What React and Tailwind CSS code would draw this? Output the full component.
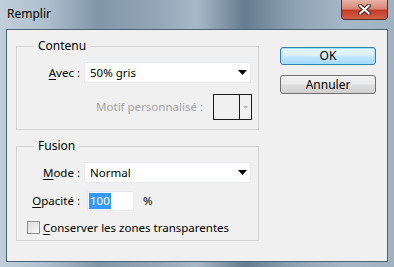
import React from "react";

const font = { fontFamily: '"Noto Sans", "Liberation Sans", sans-serif' };

const Key = ({ children }) => <span className="underline underline-offset-2">{children}</span>;

const Arrow = () => (
  <svg width="9" height="5" viewBox="0 0 9 5" className="shrink-0">
    <path d="M0 0 L9 0 L4.5 5 Z" fill="#000" />
  </svg>
);

const Select = ({ value }) => (
  <div className="flex h-[21px] w-[167px] items-center justify-between border border-[#e6e9ed] bg-white pl-[5px] pr-[3px]">
    <span>{value}</span>
    <Arrow />
  </div>
);

const Group = ({ title, children, className = "" }) => (
  <fieldset className={`w-[243px] border border-[#d5d5d5] ${className}`}>
    <legend className="ml-[17px] px-[4px] text-[12px] leading-[16px]">{title}</legend>
    {children}
  </fieldset>
);

export default function App() {
  return (
    <div
      className="flex h-[267px] w-[394px] flex-col text-[11.5px] text-black"
      style={font}
    >
      <div className="flex h-[267px] flex-col bg-[linear-gradient(90deg,#c2cfda_0%,#adbecd_12%,#8196a9_25%,#93a7b8_40%,#a7b9c8_50%,#657c90_62%,#8ea3b5_75%,#a6b8c7_88%,#9fb2c2_100%)]">
        <div className="flex h-[29px] items-start justify-between pl-[7px] pr-[6px]">
          <span className="mt-[6px] text-[12px] leading-[16px]">Remplir</span>
          <div className="flex h-[20px] w-[47px] items-center justify-center rounded-b-[4px] border border-t-0 border-[#5b2e28] bg-[linear-gradient(180deg,#e7b3a7_0%,#d98776_45%,#c43c28_55%,#d0604a_100%)]">
            <svg width="13" height="11" viewBox="0 0 13 11">
              <path d="M2 1.5 L11 9.5 M11 1.5 L2 9.5" stroke="#3a1a16" strokeWidth="4" strokeLinecap="round" />
              <path d="M2 1.5 L11 9.5 M11 1.5 L2 9.5" stroke="#fff" strokeWidth="2.2" strokeLinecap="round" />
            </svg>
          </div>
        </div>
        <div className="mx-[6px] mb-[5px] flex flex-1 border border-[#4e6274] bg-[#f0f0f0]">
          <div className="ml-[9px] mt-[8px] flex flex-col gap-[8px]">
            <Group title="Contenu" className="h-[92px]">
              <div className="mt-[8px] flex items-center">
                <span className="w-[63px] text-right">
                  <Key>A</Key>vec :
                </span>
                <div className="ml-[4px]">
                  <Select value="50% gris" />
                </div>
              </div>
              <div className="mt-[11px] flex items-center justify-end pr-[6px]">
                <span className="text-[#a3a3a3]">Motif personnalisé :</span>
                <div className="ml-[10px] flex h-[26px] w-[39px] border border-[#1a1a1a] bg-[#f0f0f0]">
                  <div className="w-[26px] border-r border-[#1a1a1a]" />
                  <div className="flex flex-1 items-center justify-center">
                    <svg width="5" height="3" viewBox="0 0 5 3">
                      <path d="M0 0 L5 0 L2.5 3 Z" fill="#b8b8b8" />
                    </svg>
                  </div>
                </div>
              </div>
            </Group>
            <Group title="Fusion" className="h-[103px]">
              <div className="mt-[8px] flex items-center">
                <span className="w-[63px] text-right">
                  <Key>M</Key>ode :
                </span>
                <div className="ml-[4px]">
                  <Select value="Normal" />
                </div>
              </div>
              <div className="mt-[8px] flex items-center">
                <span className="w-[63px] text-right">
                  <Key>O</Key>pacité :
                </span>
                <div className="ml-[7px] flex h-[20px] w-[47px] items-center border border-[#e6e9ed] bg-white pl-[1px]">
                  <span className="bg-[#3399ff] px-[1px] leading-[16px] text-white">100</span>
                </div>
                <span className="ml-[9px]">%</span>
              </div>
              <div className="mt-[8px] flex items-center pl-[10px]">
                <div className="h-[13px] w-[13px] border border-[#8f8f8f] bg-[linear-gradient(135deg,#dcdcdc,#f8f8f8)]" />
                <span className="ml-[3px]">
                  <Key>C</Key>onserver les zones transparentes
                </span>
              </div>
            </Group>
          </div>
          <div className="ml-[21px] mt-[17px] flex flex-col gap-[10px]">
            <div className="flex h-[18px] w-[96px] items-center justify-center rounded-[3px] border border-[#3c7fb1] bg-[linear-gradient(180deg,#eaf6fd_0%,#d9f0fc_45%,#bee6fd_55%,#a7d9f5_100%)] text-[12px] shadow-[inset_0_0_0_1px_#9fe0ff]">
              OK
            </div>
            <div className="flex h-[19px] w-[96px] items-center justify-center rounded-[3px] border border-[#707070] bg-[linear-gradient(180deg,#f2f2f2_0%,#ebebeb_45%,#dddddd_55%,#cfcfcf_100%)] text-[12px]">
              Annuler
            </div>
          </div>
        </div>
      </div>
    </div>
  );
}
